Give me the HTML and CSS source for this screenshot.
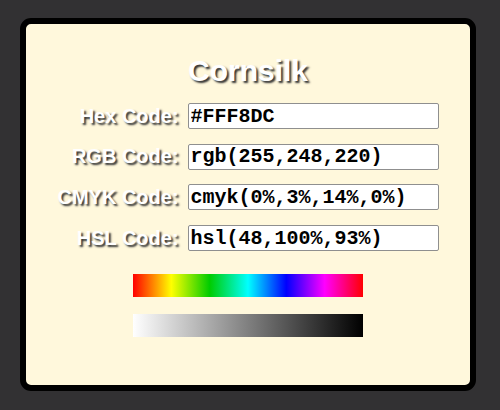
FILE: index.html
```html
<!DOCTYPE html>
<html lang="en">
<head>
<meta charset="UTF-8">
<title>Cornsilk</title>
<link rel="stylesheet" href="styles.css">
</head>
<body>
    <div class="card">
        <h1 class="title">Cornsilk</h1>
        <div class="codes">
            <label for="hex">Hex Code:</label>
            <input type="text" id="hex" value="#FFF8DC" readonly>

            <label for="rgb">RGB Code:</label>
            <input type="text" id="rgb" value="rgb(255,248,220)" readonly>

            <label for="cmyk">CMYK Code:</label>
            <input type="text" id="cmyk" value="cmyk(0%,3%,14%,0%)" readonly>

            <label for="hsl">HSL Code:</label>
            <input type="text" id="hsl" value="hsl(48,100%,93%)" readonly>
        </div>
        <div class="bar hue"></div>
        <div class="bar gray"></div>
    </div>
</body>
</html>
```

FILE: styles.css
```css
body {
    margin: 0;
    padding: 18px 0 0 20px;
    background-color: #323133;
    font-family: "Liberation Sans", Arial, sans-serif;
}
.card {
    width: 456px;
    height: 373px;
    box-sizing: border-box;
    border: 6px solid #000;
    border-radius: 11px;
    background-color: #fff8dc;
    padding-top: 30px;
}
.title {
    margin: 0;
    text-align: center;
    font-size: 30px;
    font-weight: bold;
    line-height: 34px;
    color: #fff;
    text-shadow: 2px 2px 2px #333;
}
.codes {
    display: grid;
    grid-template-columns: auto 251px;
    justify-content: center;
    align-items: center;
    column-gap: 9px;
    row-gap: 14.7px;
    margin-top: 15px;
}
.codes label {
    text-align: right;
    font-size: 20px;
    font-weight: bold;
    color: #fff;
    text-shadow: 2px 2px 2px #333;
}
.codes input {
    width: 251px;
    height: 26px;
    margin: 0;
    padding: 0 2px;
    box-sizing: border-box;
    border: 1px solid #8f8f8f;
    border-radius: 2px;
    background: #fff;
    font-family: "Liberation Mono", "Courier New", monospace;
    font-weight: bold;
    font-size: 20px;
    color: #000;
}
.bar {
    width: 230px;
    height: 23px;
    margin: 0 auto;
}
.hue {
    margin-top: 22.6px;
    background: linear-gradient(to right, #f00, #ff0, #0c0, #0ff, #00f, #f0f, #f00);
}
.gray {
    margin-top: 17.3px;
    background: linear-gradient(to right, #fff, #000);
}
```
